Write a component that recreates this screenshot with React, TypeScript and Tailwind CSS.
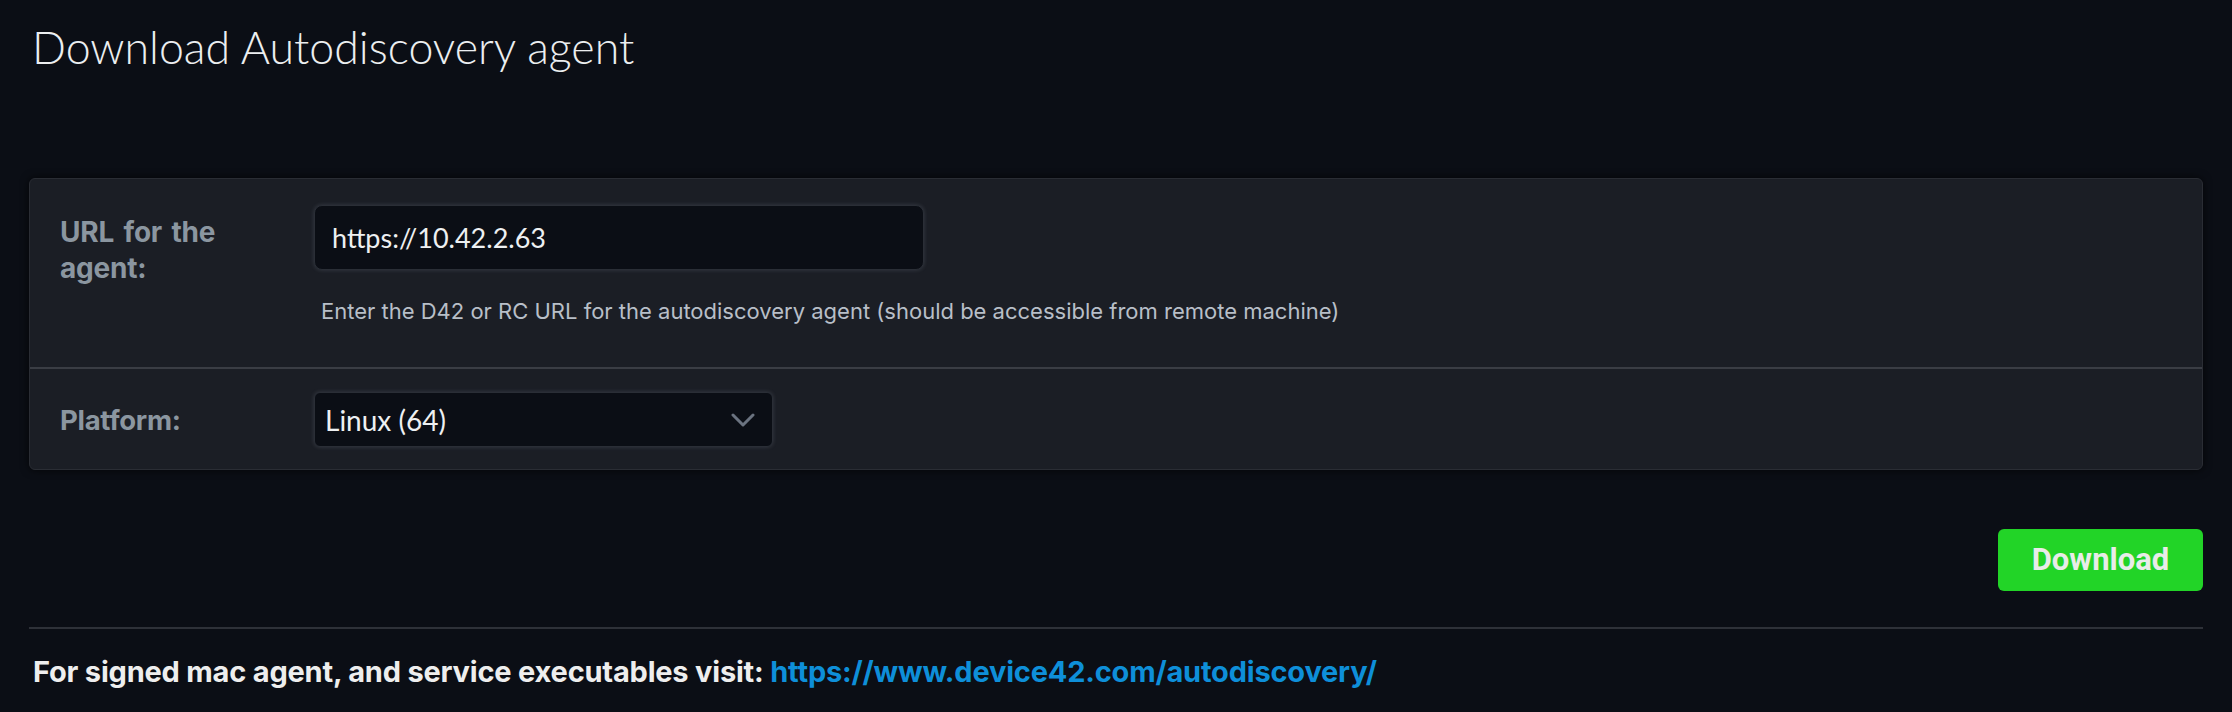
import React from "react";

const gil = { fontFamily: "Inter, Lato, sans-serif" };

export default function App() {
  return (
    <div className="h-[712px] w-full overflow-hidden bg-[#0b0e15] px-[29px] pt-[21px]" style={{ fontFamily: "Lato, 'Noto Sans', sans-serif" }}>
      <h1 className="ml-[3px] text-[44.7px] font-light leading-[53px] text-[#eceef0]" style={{ fontFamily: "Lato, sans-serif" }}>
        Download Autodiscovery agent
      </h1>

      <div className="mt-[104px] rounded-[6px] border border-[#2a2d34] bg-[#1b1e25] shadow-[0_0_8px_rgba(0,0,0,0.7)]">
        <div className="flex items-start pl-[30px] pt-[26px] pb-[42px]">
          <div className="w-[254px] pt-[9px] text-[28px] font-bold leading-[36px] tracking-[-0.2px] [word-spacing:3px] text-[#8b96a0]" style={gil}>
            URL for the
            <br />
            agent:
          </div>
          <div className="flex flex-col">
            <div className="flex h-[65px] w-[610px] items-center rounded-[8px] border border-[#2a2e36] bg-[#0b0e15] pl-[17px] shadow-[0_0_4px_rgba(190,200,220,0.18)]">
              <span className="text-[27px] leading-[32px] text-[#eef0f2]">https://10.42.2.63</span>
            </div>
            <div className="mt-[27px] pl-[7px] text-[22px] leading-[28px] text-[#b8bfc8]" style={gil}>
              Enter the D42 or RC URL for the autodiscovery agent (should be accessible from remote machine)
            </div>
          </div>
        </div>
        <div className="h-[2px] bg-[#3a3d44]" />
        <div className="flex items-center pl-[30px] pt-[23px] pb-[22px]">
          <div className="w-[254px] text-[27.5px] font-bold leading-[36px] tracking-[-0.3px] text-[#8b96a0]" style={gil}>Platform:</div>
          <div className="flex h-[55px] w-[459px] items-center justify-between rounded-[6px] border border-[#2a2e36] bg-[#0b0e15] pl-[10px] pr-[17px] shadow-[0_0_4px_rgba(190,200,220,0.18)]">
            <span className="text-[28px] leading-[34px] text-[#eef0f2]">Linux (64)</span>
            <svg width="24" height="16" viewBox="0 0 24 16" fill="none">
              <path d="M2 3 L12 13 L22 3" stroke="#6b7380" strokeWidth="3" strokeLinecap="round" strokeLinejoin="round" />
            </svg>
          </div>
        </div>
      </div>

      <div className="mt-[59px] flex justify-end">
        <button className="flex h-[62px] w-[205px] items-center justify-center rounded-[6px] bg-[#22d427] text-[31px] font-bold text-[#e9ece9]" style={{ fontFamily: "Roboto, sans-serif" }}>
          Download
        </button>
      </div>

      <div className="mt-[36px] h-[2px] bg-[#2e3138]" />
      <div className="mt-[25px] pl-[4px] text-[29px] font-bold leading-[36px] tracking-[-0.2px] text-[#eeeeee]" style={gil}>
        For signed mac agent, and service executables visit:{" "}
        <a className="text-[#0e8fd9]" href="#">https://www.device42.com/autodiscovery/</a>
      </div>
    </div>
  );
}
